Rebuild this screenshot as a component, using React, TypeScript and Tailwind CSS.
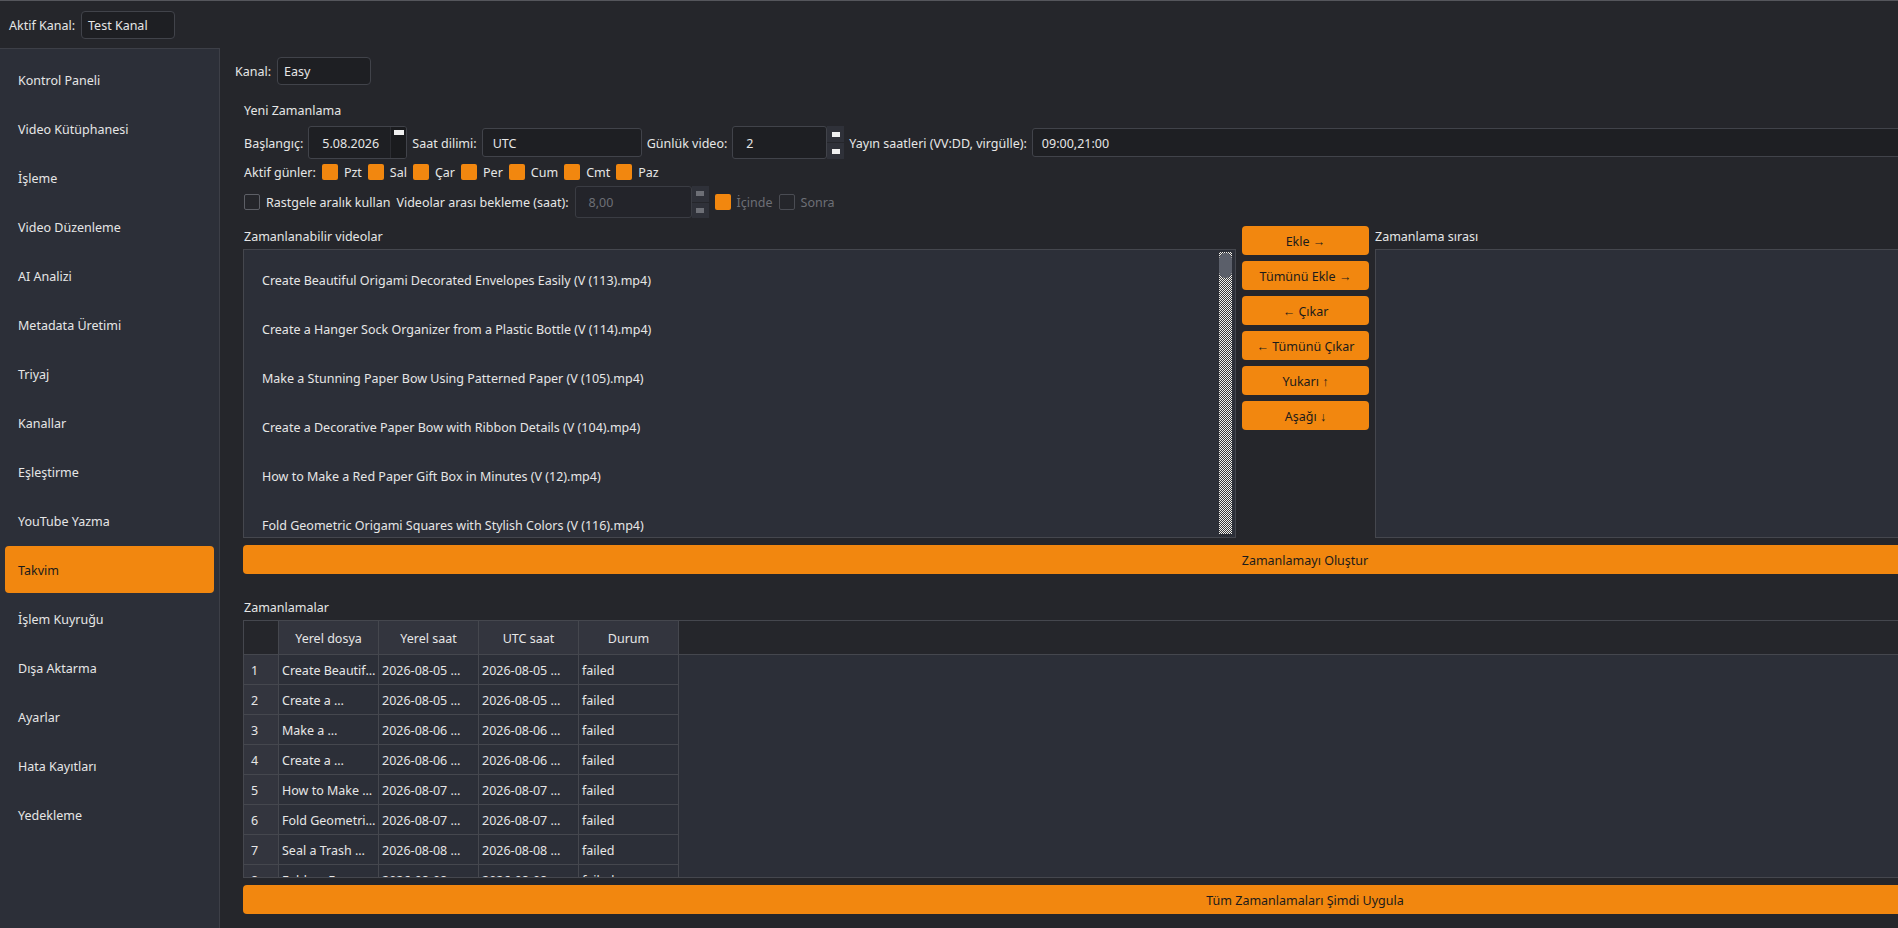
import React from 'react'

const navItems = [
  'Kontrol Paneli',
  'Video Kütüphanesi',
  'İşleme',
  'Video Düzenleme',
  'AI Analizi',
  'Metadata Üretimi',
  'Triyaj',
  'Kanallar',
  'Eşleştirme',
  'YouTube Yazma',
  'Takvim',
  'İşlem Kuyruğu',
  'Dışa Aktarma',
  'Ayarlar',
  'Hata Kayıtları',
  'Yedekleme',
]

const videos = [
  'Create Beautiful Origami Decorated Envelopes Easily (V (113).mp4)',
  'Create a Hanger Sock Organizer from a Plastic Bottle (V (114).mp4)',
  'Make a Stunning Paper Bow Using Patterned Paper (V (105).mp4)',
  'Create a Decorative Paper Bow with Ribbon Details (V (104).mp4)',
  'How to Make a Red Paper Gift Box in Minutes (V (12).mp4)',
  'Fold Geometric Origami Squares with Stylish Colors (V (116).mp4)',
  'Seal a Trash Bag Easily with a Simple Trick (V (117).mp4)',
]

const days = ['Pzt', 'Sal', 'Çar', 'Per', 'Cum', 'Cmt', 'Paz']

const actions = ['Ekle →', 'Tümünü Ekle →', '← Çıkar', '← Tümünü Çıkar', 'Yukarı ↑', 'Aşağı ↓']

const rows = [
  ['Create Beautif…', '2026-08-05 …', '2026-08-05 …', 'failed'],
  ['Create a …', '2026-08-05 …', '2026-08-05 …', 'failed'],
  ['Make a …', '2026-08-06 …', '2026-08-06 …', 'failed'],
  ['Create a …', '2026-08-06 …', '2026-08-06 …', 'failed'],
  ['How to Make …', '2026-08-07 …', '2026-08-07 …', 'failed'],
  ['Fold Geometri…', '2026-08-07 …', '2026-08-07 …', 'failed'],
  ['Seal a Trash …', '2026-08-08 …', '2026-08-08 …', 'failed'],
  ['Fold an Ea…', '2026-08-08 …', '2026-08-08 …', 'failed'],
]

function Check({ on, dim }: { on?: boolean; dim?: boolean }) {
  if (on) return <span className="w-[16px] h-[16px] shrink-0 rounded-[2px] bg-[#f2870f]" />
  return (
    <span
      className={`w-[16px] h-[16px] shrink-0 rounded-[2px] border bg-[#25262b] ${dim ? 'border-[#4a4c53]' : 'border-[#5d5f66]'}`}
    />
  )
}

function Spinner({ dim }: { dim?: boolean }) {
  const dash = dim ? 'bg-[#6d6f76]' : 'bg-[#f0f0f0]'
  return (
    <div className="w-[17px] h-full flex flex-col bg-[#2f3139]">
      <div className="flex-1 flex items-center justify-center border-b border-[#25262b]">
        <span className={`w-[8px] h-[5px] ${dash}`} />
      </div>
      <div className="flex-1 flex items-center justify-center">
        <span className={`w-[8px] h-[5px] ${dash}`} />
      </div>
    </div>
  )
}

export default function App() {
  return (
    <div
      className="w-[1898px] h-[928px] overflow-hidden bg-[#25262b] text-[#e6e6e6] text-[12.5px] leading-none"
      style={{ fontFamily: '"Noto Sans", "Open Sans", sans-serif' }}
    >
      {/* top bar */}
      <div className="h-[48px] flex items-center gap-[6px] pl-[9px] border-t border-[#55565c]">
        <span className="pt-[3px]">Aktif Kanal:</span>
        <div className="w-[94px] h-[28px] flex items-center pl-[6px] pt-[3px] rounded-[4px] border border-[#41434a] bg-[#1e1f23]">
          Test Kanal
        </div>
      </div>

      <div className="flex h-[880px]">
        {/* sidebar */}
        <div className="w-[220px] shrink-0 bg-[#2c2f38] border-t border-r border-[#3d3f47] pt-[7px] px-[5px] flex flex-col gap-[2px]">
          {navItems.map((n) =>
            n === 'Takvim' ? (
              <div key={n} className="h-[47px] flex items-center pl-[13px] pt-[3px] rounded-[4px] bg-[#f2870f] text-[#1b1b1b]">
                {n}
              </div>
            ) : (
              <div key={n} className="h-[47px] flex items-center pl-[13px] pt-[3px]">
                {n}
              </div>
            )
          )}
        </div>

        {/* main */}
        <div className="flex-1 overflow-hidden">
          <div className="w-[2160px] pl-[15px] pt-[9px]">
            <div className="h-[28px] flex items-center gap-[6px]">
              <span className="pt-[3px]">Kanal:</span>
              <div className="w-[94px] h-[28px] flex items-center pl-[6px] pt-[3px] rounded-[4px] border border-[#41434a] bg-[#1e1f23]">
                Easy
              </div>
            </div>

            <div className="ml-[8px] w-[2124px]">
              <div className="mt-[16px] h-[18px] flex items-center pl-[1px] pt-[3px]">Yeni Zamanlama</div>

              {/* row 1 */}
              <div className="mt-[7px] h-[33px] flex items-center gap-[5px] pl-[1px]">
                <span className="pt-[3px]">Başlangıç:</span>
                <div className="w-[99px] h-[33px] flex items-stretch rounded-[3px] border border-[#41434a] bg-[#1e1f23] overflow-hidden">
                  <div className="flex-1 flex items-center pl-[13px] pt-[3px]">5.08.2026</div>
                  <div className="w-[16px] bg-[#1a1b1e] border-l border-[#2c2d32] flex justify-center pt-[3px]">
                    <span className="w-[10px] h-[5px] bg-[#f0f0f0]" />
                  </div>
                </div>
                <span className="pt-[3px]">Saat dilimi:</span>
                <div className="w-[160px] h-[29px] flex items-center pl-[10px] pt-[3px] rounded-[3px] border border-[#41434a] bg-[#1e1f23]">
                  UTC
                </div>
                <span className="pt-[3px]">Günlük video:</span>
                <div className="h-[33px] flex">
                  <div className="w-[95px] h-[33px] flex items-center pl-[13px] pt-[3px] rounded-[3px] border border-[#41434a] bg-[#1e1f23]">
                    2
                  </div>
                  <Spinner />
                </div>
                <span className="pt-[3px]">Yayın saatleri (VV:DD, virgülle):</span>
                <div className="flex-1 h-[29px] flex items-center pl-[9px] pt-[3px] rounded-[3px] border border-[#41434a] bg-[#1e1f23]">
                  09:00,21:00
                </div>
              </div>

              {/* row 2 */}
              <div className="mt-[5px] h-[16px] flex items-center gap-[6px] pl-[1px]">
                <span className="pt-[3px]">Aktif günler:</span>
                {days.map((d) => (
                  <React.Fragment key={d}>
                    <Check on />
                    <span className="pt-[3px]">{d}</span>
                  </React.Fragment>
                ))}
              </div>

              {/* row 3 */}
              <div className="mt-[6px] h-[32px] flex items-center gap-[6px] pl-[1px]">
                <Check />
                <span className="pt-[3px]">Rastgele aralık kullan</span>
                <span className="pt-[3px]">Videolar arası bekleme (saat):</span>
                <div className="h-[32px] flex">
                  <div className="w-[117px] h-[32px] flex items-center pl-[13px] pt-[3px] rounded-[3px] border border-[#3a3c43] bg-[#23242a] text-[#6d6f76]">
                    8,00
                  </div>
                  <Spinner dim />
                </div>
                <Check on />
                <span className="pt-[3px] text-[#6d6f76]">İçinde</span>
                <Check dim />
                <span className="pt-[3px] text-[#6d6f76]">Sonra</span>
              </div>

              {/* lists */}
              <div className="mt-[8px] h-[312px] flex gap-[6px]">
                <div className="w-[993px] flex flex-col">
                  <div className="h-[20px] flex items-center pl-[1px] pt-[3px]">Zamanlanabilir videolar</div>
                  <div className="mt-[3px] flex-1 relative border border-[#45474e] bg-[#2c2f38] overflow-hidden pt-[5px]">
                    {videos.map((v) => (
                      <div key={v} className="h-[49px] flex items-center pl-[18px] pt-[3px]">
                        {v}
                      </div>
                    ))}
                    <div className="absolute right-[3px] top-[2px] bottom-[3px] w-[13px] bg-[image:repeating-conic-gradient(#f0f0f0_0%_25%,#3a3a3a_0%_50%)] bg-[length:2px_2px]">
                      <div className="mt-[1px] h-[25px] rounded-full bg-[#5b5f6a]" />
                    </div>
                  </div>
                </div>

                <div className="w-[127px] flex flex-col gap-[6px]">
                  {actions.map((a) => (
                    <div
                      key={a}
                      className="h-[29px] flex items-center justify-center pt-[3px] rounded-[4px] bg-[#f2870f] text-[#1b1b1b]"
                    >
                      {a}
                    </div>
                  ))}
                </div>

                <div className="flex-1 flex flex-col">
                  <div className="h-[20px] flex items-center pt-[3px]">Zamanlama sırası</div>
                  <div className="mt-[3px] flex-1 border border-[#45474e] bg-[#2c2f38]" />
                </div>
              </div>

              <div className="mt-[7px] h-[29px] flex items-center justify-center pt-[3px] rounded-[4px] bg-[#f2870f] text-[#1b1b1b]">
                Zamanlamayı Oluştur
              </div>

              <div className="mt-[24px] h-[18px] flex items-center pl-[1px] pt-[3px]">Zamanlamalar</div>

              {/* table */}
              <div className="mt-[4px] h-[258px] border border-[#45474e] bg-[#2c2f38] overflow-hidden">
                <div className="h-[34px] flex bg-[#25262b] border-b border-[#45474e]">
                  <div className="w-[35px] border-r border-[#45474e]" />
                  {['Yerel dosya', 'Yerel saat', 'UTC saat', 'Durum'].map((h) => (
                    <div
                      key={h}
                      className="w-[100px] flex items-center justify-center pt-[3px] bg-[#33353e] border-r border-[#45474e]"
                    >
                      {h}
                    </div>
                  ))}
                </div>
                {rows.map((r, i) => (
                  <div key={i} className="h-[30px] flex">
                    <div className="w-[35px] flex items-center pl-[7px] pt-[3px] bg-[#33353e] border-r border-b border-[#45474e]">
                      {i + 1}
                    </div>
                    {r.map((c, j) => (
                      <div
                        key={j}
                        className="w-[100px] flex items-center pl-[3px] pt-[3px] whitespace-nowrap overflow-hidden border-r border-b border-[#45474e]"
                      >
                        {c}
                      </div>
                    ))}
                  </div>
                ))}
              </div>

              <div className="mt-[7px] h-[29px] flex items-center justify-center pt-[3px] rounded-[4px] bg-[#f2870f] text-[#1b1b1b]">
                Tüm Zamanlamaları Şimdi Uygula
              </div>
            </div>
          </div>
        </div>
      </div>
    </div>
  )
}
